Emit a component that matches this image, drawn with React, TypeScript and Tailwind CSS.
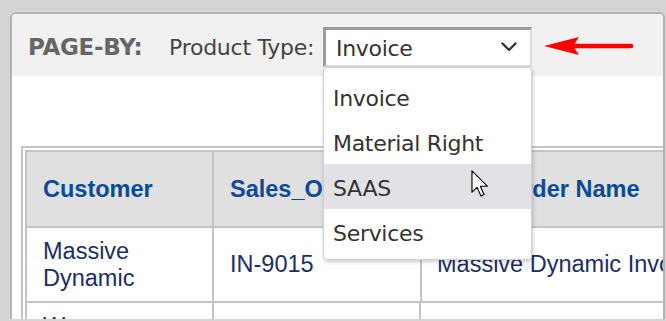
const options = ["Invoice", "Material Right", "SAAS", "Services"];

type Row = { customer: string; order: string; name: string };

const rows: Row[] = [
  { customer: "Massive Dynamic", order: "IN-9015", name: "Massive Dynamic Invoice" },
  { customer: "Wayne Enterprises", order: "IN-9016", name: "Wayne Enterprises Invoice" },
];

const Chevron = () => (
  <svg width="16" height="10" viewBox="0 0 16 10" fill="none">
    <path d="M1.5 1.5 L8 8 L14.5 1.5" stroke="#333" strokeWidth="2.4" strokeLinecap="round" strokeLinejoin="round" />
  </svg>
);

const RedArrow = () => (
  <svg width="92" height="20" viewBox="0 0 92 20" fill="none">
    <line x1="30" y1="10" x2="89" y2="10" stroke="#ff0000" strokeWidth="4.5" strokeLinecap="round" />
    <polygon points="2,10 37,1 31,10 37,19" fill="#ff0000" />
  </svg>
);

// mouse pointer sitting over the hovered option
const Pointer = () => (
  <svg width="18" height="27" viewBox="0 0 12.5 19" fill="none">
    <path
      d="M0.6 0.6 L0.6 15.6 L4.2 12.2 L6.9 18.2 L9.1 17.2 L6.5 11.4 L11.4 11.4 Z"
      fill="#fff"
      stroke="#000"
      strokeWidth="0.8"
      strokeLinejoin="round"
    />
  </svg>
);

export default function App() {
  const selected = "Invoice";
  const hovered = "SAAS";

  return (
    <div className="w-[666px] h-[321px] overflow-hidden bg-[#d4d4d4] pt-[12px] pl-[10px]">
      <div className="relative w-[655px] h-[307px] overflow-hidden rounded-t-[6px] border-2 border-b-0 border-[#b3b3b3] bg-white">
        {/* Page-by bar */}
        <div className="flex h-[62px] items-center bg-[#f1f1f1] pl-[16px] pt-[3px] font-['DejaVu_Sans',sans-serif]">
          <span className="w-[141px] pt-[2px] text-[23px] font-bold tracking-[-0.3px] text-[#666]">PAGE-BY:</span>
          <span className="w-[154px] pt-[2px] text-[22px] tracking-[-0.25px] text-[#444]">Product Type:</span>
          <div className="relative">
            <div className="flex h-[40px] w-[209px] items-center justify-between border-t-[3px] border-l-[3px] border-r-2 border-b-2 border-t-[#9b9b9b] border-l-[#9b9b9b] border-r-[#dcdcdc] border-b-[#dcdcdc] bg-white pl-[10px] pr-[13px]">
              <span className="pt-[3px] text-[22px] tracking-[-0.3px] text-[#333]">{selected}</span>
              <Chevron />
            </div>
            <div className="absolute left-0 top-[40px] z-10 w-[209px] h-[193px] rounded-[4px] border border-[#cfcfcf] bg-white pt-[6px] shadow-[1px_2px_4px_rgba(0,0,0,0.2)]">
              {options.map((opt) => (
                <div
                  key={opt}
                  className={`flex h-[45px] items-center pl-[9px] pt-[5px] text-[22px] tracking-[-0.3px] text-[#333] ${
                    opt === hovered ? "bg-[#e1e1e6]" : ""
                  }`}
                >
                  {opt}
                </div>
              ))}
            </div>
          </div>
          <div className="ml-[10px] mt-[-1px]">
            <RedArrow />
          </div>
        </div>

        {/* Grid */}
        <div className="ml-[9px] mt-[70px] w-[700px] border-2 border-[#c4c4c4] p-[2px] font-['Liberation_Sans',Arial,sans-serif] text-[23.5px] leading-[27px]">
          <div className="border-l-2 border-t-2 border-[#c4c4c4]">
            <div className="flex h-[76px] bg-[#e0e0e0] font-bold text-[#0b4a99]">
              <div className="flex w-[187px] items-center border-r-2 border-b-2 border-[#c4c4c4] pl-4">Customer</div>
              <div className="flex w-[208px] items-center border-r-2 border-b-2 border-[#c4c4c4] pl-4">Sales_Order</div>
              <div className="flex flex-1 items-center border-r-2 border-b-2 border-[#c4c4c4] pl-[15px]">Sales Order Name</div>
            </div>
            {rows.map((r) => (
              <div key={r.order} className="flex h-[75px] text-[#1c2d6b]">
                <div className="flex w-[187px] items-center border-r-2 border-b-2 border-[#c4c4c4] pl-4 pr-4">{r.customer}</div>
                <div className="flex w-[208px] items-center border-r-2 border-b-2 border-[#c4c4c4] pl-4">{r.order}</div>
                <div className="flex flex-1 items-center whitespace-nowrap border-r-2 border-b-2 border-[#c4c4c4] pl-[15px]">{r.name}</div>
              </div>
            ))}
          </div>
        </div>

        <div className="absolute left-[459px] top-[156px] z-20">
          <Pointer />
        </div>
      </div>
    </div>
  );
}
